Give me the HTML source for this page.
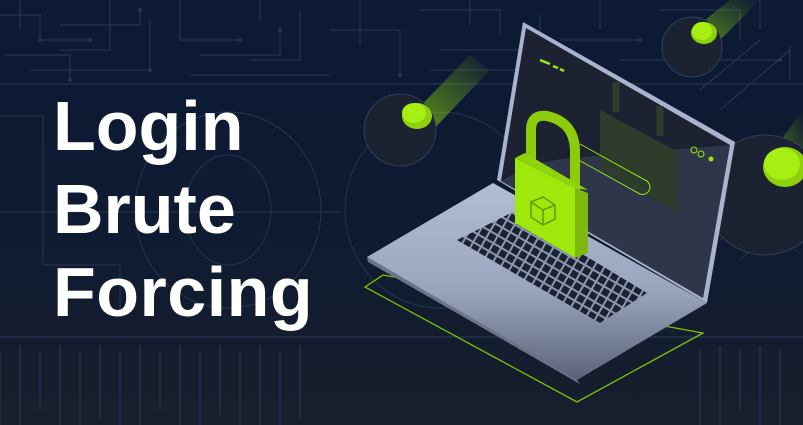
<!DOCTYPE html>
<html><head><meta charset="utf-8"><style>
html,body{margin:0;padding:0;width:803px;height:425px;overflow:hidden;background:#0d1a31}
svg{display:block}
text{font-family:"Liberation Sans",sans-serif;font-weight:700;fill:#fff}
</style></head><body>
<svg width="803" height="425" viewBox="0 0 803 425" xmlns="http://www.w3.org/2000/svg">
<defs>
<linearGradient id="bg" x1="0" y1="0" x2="0" y2="1">
<stop offset="0" stop-color="#0c1a34"/><stop offset="0.55" stop-color="#0f1b31"/><stop offset="1" stop-color="#181f2c"/></linearGradient>
<linearGradient id="base" x1="0" y1="0" x2="0" y2="1">
<stop offset="0" stop-color="#b3bdd6"/><stop offset="0.55" stop-color="#9aa4bd"/><stop offset="1" stop-color="#5a6378"/></linearGradient>
<linearGradient id="trail" x1="0" y1="1" x2="1" y2="0">
<stop offset="0" stop-color="#9be60e" stop-opacity="0.9"/><stop offset="1" stop-color="#9be60e" stop-opacity="0"/></linearGradient>
<pattern id="keys" width="9" height="9" patternUnits="userSpaceOnUse" patternTransform="rotate(30)">
<rect width="9" height="9" fill="#8d97b0"/><rect x="1" y="1" width="7" height="7" fill="#1b2232"/></pattern>
<pattern id="keys2" width="9" height="9" patternUnits="userSpaceOnUse" patternTransform="rotate(30)">
<rect width="9" height="9" fill="#343a52"/><rect x="1" y="1" width="7" height="7" fill="#2a2f48"/></pattern>
</defs>
<rect width="803" height="425" fill="url(#bg)"/>
<g stroke="#26344f" stroke-width="1.3" fill="none">
<path d="M0 15H40V40H90 M20 0V30 M60 25H140V10 M110 0V50H60 M5 55H70V80 M150 20V70H100 M180 0V40H240 M200 55H280V30 M260 0V20 M300 10V60H250 M330 30H400V75 M360 0V45 M420 10H500V35 M440 50H520 M470 0V25 M540 15V70 M560 40H640 M600 0V30 M620 60H680 M660 10H740V40 M700 60H780 M760 0V30 M790 45V80 M30 70H150 M190 75H330 M430 70H520"/>
<path d="M0 84H803 M0 337H803"/>
<path d="M0 350V425 M20 345V425 M40 350V410 M60 345V425 M80 352V425 M100 345V420 M120 350V425 M140 345V425 M160 352V410 M180 345V425 M200 350V425 M220 345V415 M240 350V425 M260 345V425 M280 352V425 M300 345V420 M700 350V425 M720 345V425 M740 350V410 M760 345V425 M780 350V425"/>
</g>
<g fill="#26344f"><circle cx="40" cy="40" r="2"/><circle cx="90" cy="40" r="2"/><circle cx="140" cy="10" r="2"/><circle cx="70" cy="80" r="2"/><circle cx="240" cy="40" r="2"/><circle cx="280" cy="30" r="2"/><circle cx="400" cy="75" r="2"/><circle cx="520" cy="50" r="2"/><circle cx="640" cy="40" r="2"/><circle cx="780" cy="60" r="2"/><circle cx="150" cy="70" r="2"/></g>
<g stroke="#253552" stroke-width="1" fill="none">
<path d="M0 116H43V265H120V310"/>
<ellipse cx="228" cy="210" rx="93" ry="98"/><ellipse cx="228" cy="210" rx="43" ry="55"/>
<ellipse cx="440" cy="210" rx="95" ry="98"/>
<path d="M0 212H340"/>
</g>
<g stroke="#2b3a55" stroke-width="1"><path d="M720 240L803 160 M740 260L803 200 M700 90L760 40 M720 110L790 50"/></g>
<g>
<path d="M407 120L470 55L490 70L428 135Z" fill="url(#trail)" opacity="0.7"/>
<circle cx="400" cy="130" r="36" fill="#1b2231" stroke="#3a4560" stroke-width="0.8"/>
<ellipse cx="417" cy="116" rx="15" ry="13" fill="#8fd00c"/><ellipse cx="414" cy="113" rx="12" ry="10" fill="#a6ef12"/>
<path d="M695 28L730 0L760 0L715 45Z" fill="url(#trail)" opacity="0.6"/>
<circle cx="692" cy="47" r="30" fill="#1b2231" stroke="#3a4560" stroke-width="0.8"/>
<ellipse cx="704" cy="33" rx="13" ry="11" fill="#8fd00c"/><ellipse cx="702" cy="31" rx="10" ry="9" fill="#a6ef12"/>
<path d="M770 155L803 110L803 180Z" fill="url(#trail)" opacity="0.6"/>
<circle cx="765" cy="195" r="60" fill="#1b2231" stroke="#3a4560" stroke-width="0.8"/>
<ellipse cx="785" cy="167" rx="22" ry="20" fill="#8fd00c"/><ellipse cx="782" cy="164" rx="18" ry="16" fill="#a6ef12"/>
</g>
<path d="M365 287L383 275L703 333L577 402Z" fill="none" stroke="#7fc20c" stroke-width="1.3"/>
<path d="M523 22L735 142L707 303L497 180Z" fill="#aab3ce"/>
<path d="M526 28L730 145L703 298L501 181Z" fill="#1c2232"/>
<path d="M560 159L730 145L703 298L501 181L530 165Z" fill="#30364a"/>
<path d="M600 110L678 152V212L600 170Z" fill="#2e3d2b"/>
<path d="M616 112V82M660 136V106" stroke="#2e3d2b" stroke-width="7"/>
<path d="M540 60L550 64M553 66L558 68M560 69L564 71" stroke="#9de80c" stroke-width="2.5"/>
<path d="M580 144L645 180A7 7 0 0 1 640 194L575 158" fill="none" stroke="#9de80c" stroke-width="1"/>
<circle cx="694" cy="150" r="3" fill="none" stroke="#9de80c" stroke-width="1"/>
<circle cx="701" cy="154" r="3" fill="none" stroke="#9de80c" stroke-width="1"/>
<circle cx="711" cy="159" r="2.5" fill="#9de80c"/>
<path d="M367 257L493 183L707 303L577 380Z" fill="url(#base)"/>
<path d="M367 257L577 380L580 384L368 262Z" fill="#6b7489"/>
<path d="M457 240L513 212L647 293L600 323Z" fill="url(#keys)"/>
<path d="M531 160V130Q531 114 547 116Q574 122 575 150V190" fill="none" stroke="#8ccc0a" stroke-width="10" stroke-linecap="round"/>
<path d="M515 158L575 188L575 258L515 223Z" fill="#9fe80b"/>
<path d="M575 188L588 193L588 253L575 258Z" fill="#7fb80e"/>
<path d="M515 158L525 153L588 190L575 188Z" fill="#8fd30c"/>
<g fill="none" stroke="#5e9a0a" stroke-width="1.5"><path d="M531 202L543 197L555 205L555 219L543 225L531 217Z M531 202L543 210L555 205 M543 210V225"/></g>
<text x="53" y="150" font-size="70" letter-spacing="0">Login</text>
<text x="53" y="233" font-size="70" letter-spacing="0">Brute</text>
<text x="53" y="316" font-size="70" letter-spacing="0.5">Forcing</text>
</svg>
</body></html>
